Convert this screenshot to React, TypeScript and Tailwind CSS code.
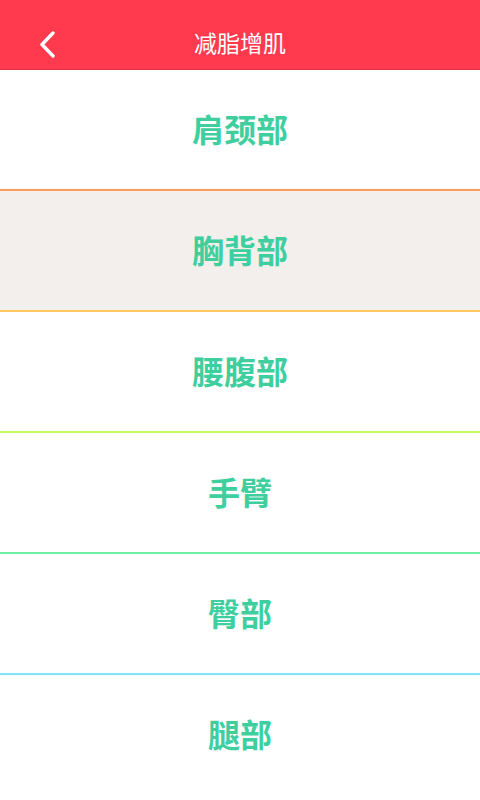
const PARTS = [
  { name: "肩颈部", line: "border-[#ff9a5c]", bg: "bg-white" },
  { name: "胸背部", line: "border-[#fdc95f]", bg: "bg-[#f3efed]" },
  { name: "腰腹部", line: "border-[#c2ff5c]", bg: "bg-white" },
  { name: "手臂", line: "border-[#6ef0a4]", bg: "bg-white" },
  { name: "臀部", line: "border-[#7ee8f2]", bg: "bg-white" },
  { name: "腿部", line: "border-transparent", bg: "bg-white" },
];

export default function App() {
  return (
    <div
      className="flex h-[800px] w-[480px] flex-col overflow-hidden bg-white"
      style={{ fontFamily: '"Noto Sans CJK SC", "Noto Sans", sans-serif' }}
    >
      {/* Header */}
      <header className="relative flex h-[70px] shrink-0 items-center justify-center border-b border-[#e8303f] bg-[#ff3a4e] pt-[16px]">
        <button className="absolute left-[37px] top-[30px] flex h-[28px] w-[20px] items-center justify-center text-white">
          <svg width="17" height="27" viewBox="0 0 17 27" fill="none">
            <path
              d="M14 2 L3 13.5 L14 25"
              stroke="currentColor"
              strokeWidth={3.4}
              strokeLinecap="round"
              strokeLinejoin="round"
            />
          </svg>
        </button>
        <h1 className="text-[23px] leading-none text-white">减脂增肌</h1>
      </header>

      {/* Body parts list */}
      <ul className="flex flex-col">
        {PARTS.map((p) => (
          <li
            key={p.name}
            className={`flex h-[121px] shrink-0 items-center justify-center border-b-2 pb-1 ${p.line} ${p.bg}`}
          >
            <span className="text-[32px] font-bold leading-none text-[#3fcf9f]">{p.name}</span>
          </li>
        ))}
      </ul>
    </div>
  );
}
